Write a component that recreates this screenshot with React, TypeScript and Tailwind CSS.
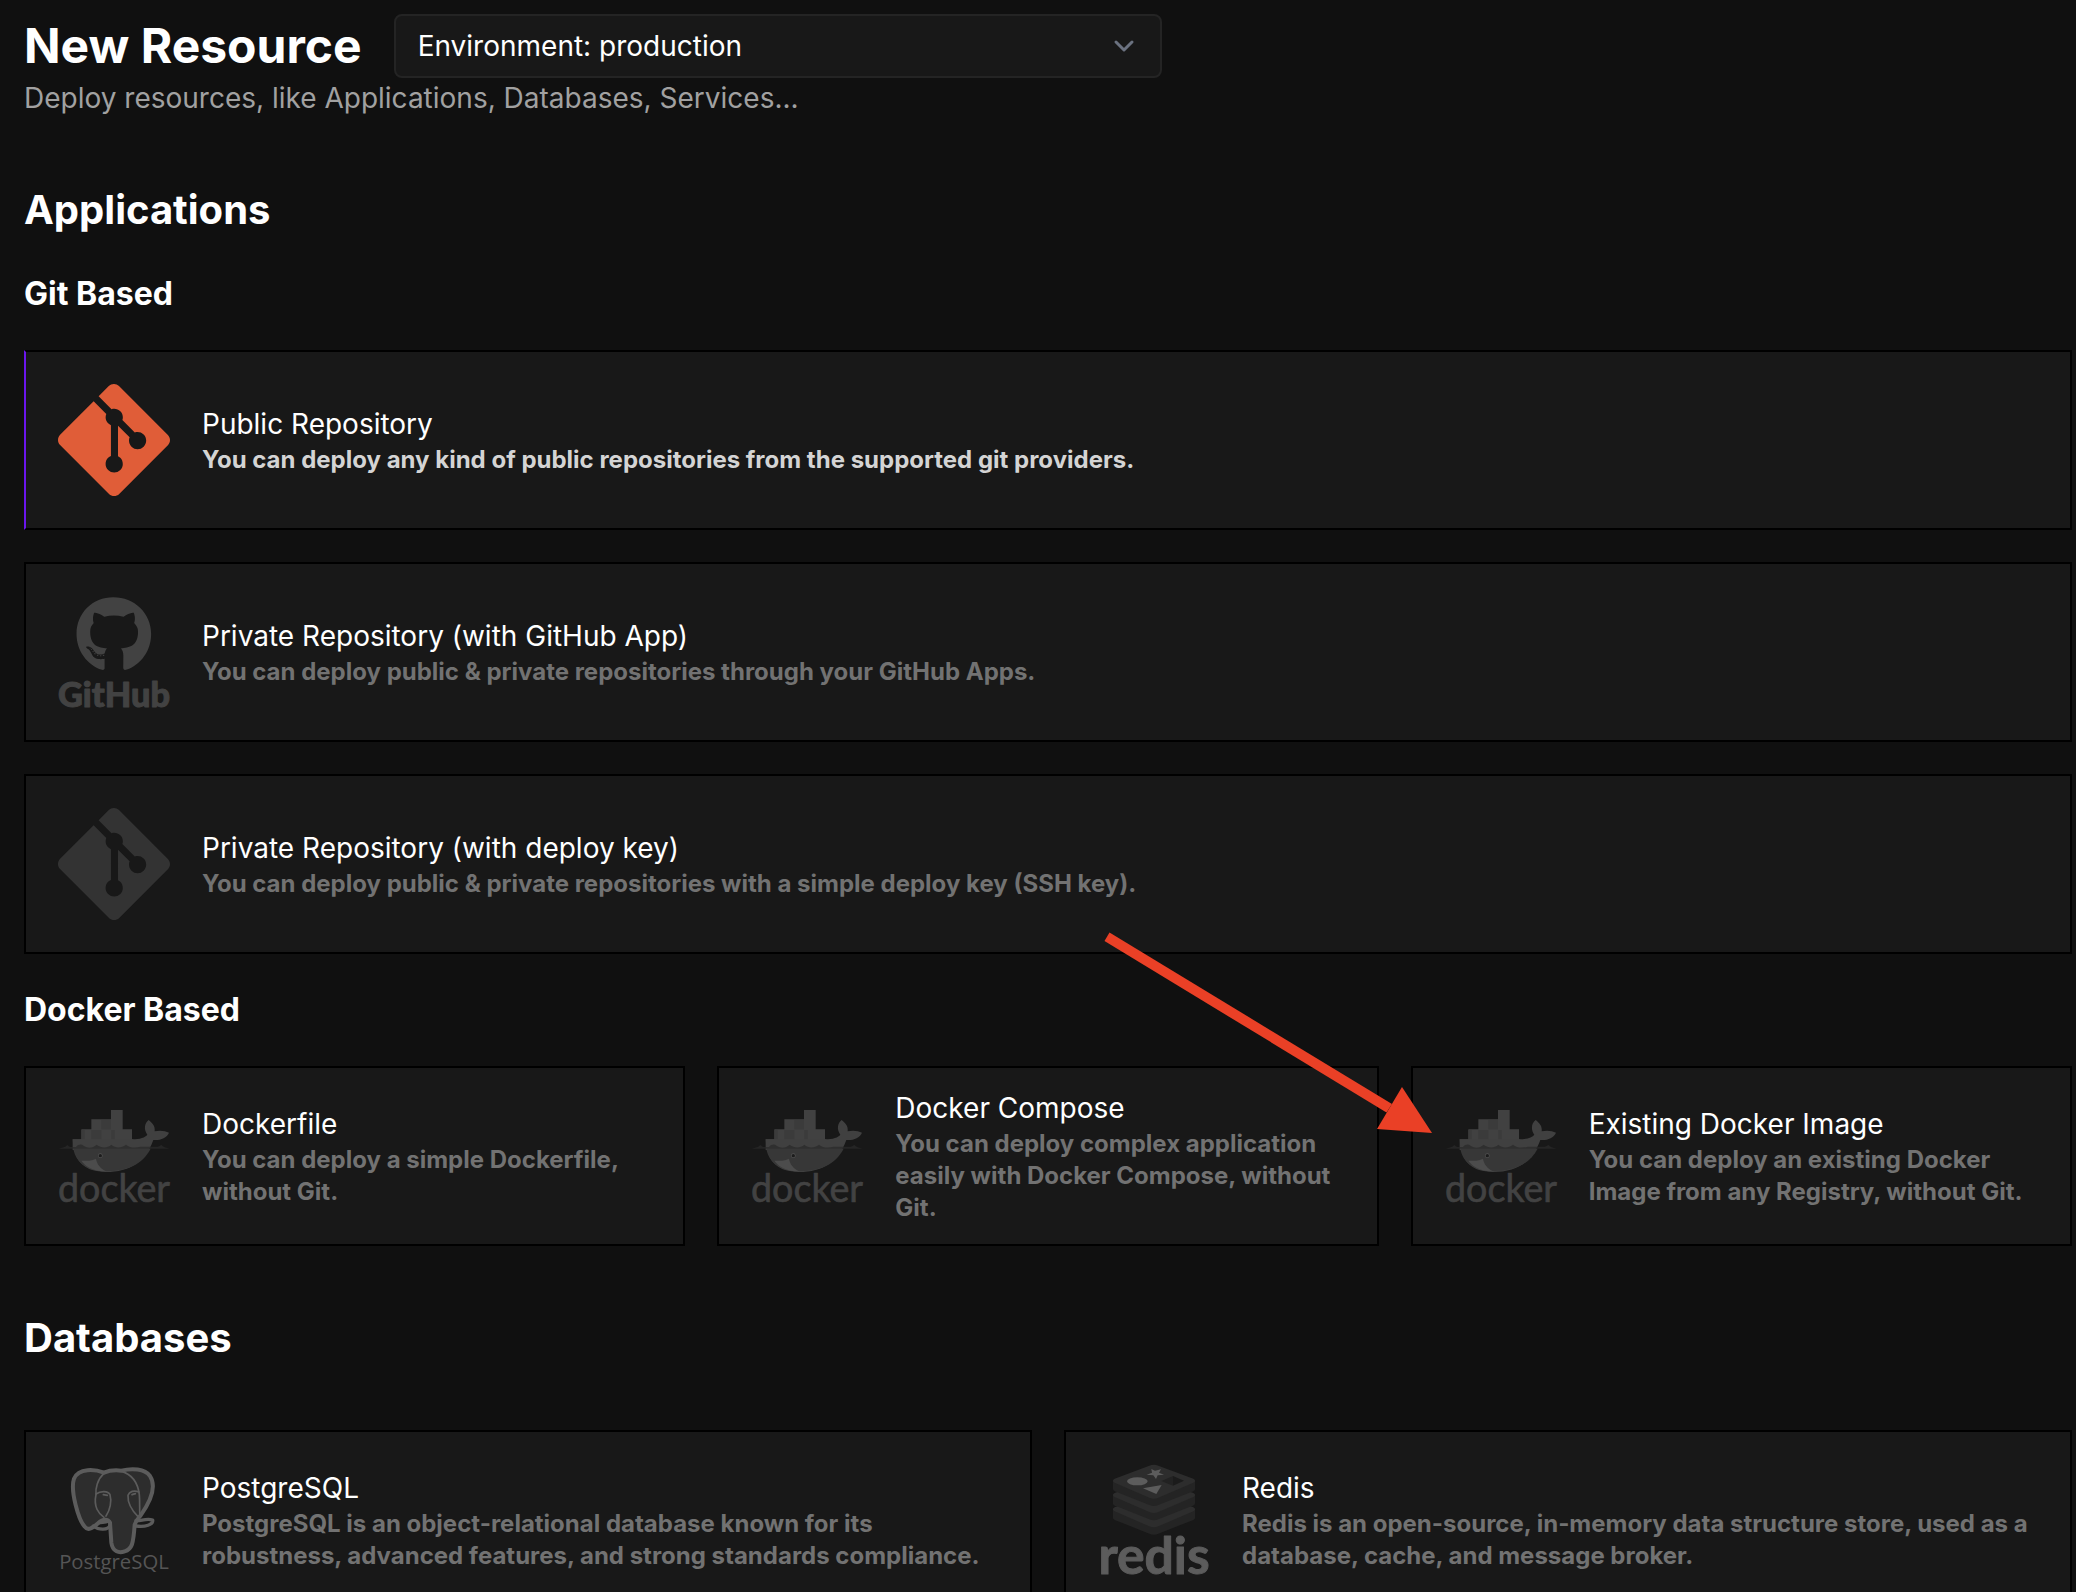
import { useState } from 'react';
import type { ReactNode } from 'react';
import { SiGit } from 'react-icons/si';
import { FaGithub } from 'react-icons/fa';

type CardProps = {
  title: string;
  description: string;
  logo: ReactNode;
  active?: boolean;
  children?: ReactNode;
};

function GithubLogo() {
  return (
    <svg viewBox="0 0 336 336" className="size-28 shrink-0 overflow-visible" fill="#424242" aria-hidden="true">
      <FaGithub x={52} y={0} size={231} color="#424242" />
      <text
        x="168"
        y="332"
        fontSize="103"
        fontWeight="900"
        textAnchor="middle"
        stroke="#424242"
        strokeWidth="3"
        strokeLinejoin="round"
        fontFamily="Lato, sans-serif"
      >
        GitHub
      </text>
    </svg>
  );
}

function DockerLogo() {
  return (
    <svg viewBox="0 0 336 336" className="size-28 shrink-0 overflow-visible" aria-hidden="true">
      {/* containers */}
      <g fill="#414141">
        <path d="M44 118H70V88H100V58H159V30H194V88H222V118H226V150H44Z" />
      </g>
      <g fill="#3b3b3b">
        <rect x="70" y="90" width="10" height="28" />
        <rect x="100" y="90" width="30" height="28" />
        <rect x="130" y="60" width="29" height="28" />
        <rect x="160" y="90" width="10" height="28" />
      </g>
      {/* hull and tail */}
      <path
        d="M44 118H222C246 118 262 112 268 104C256 88 260 68 272 60C284 70 292 78 290 94C304 90 322 92 333 98C326 114 306 122 286 120C262 186 216 216 144 216C82 214 48 190 44 118Z"
        fill="#404040"
      />
      <path d="M46 146H278C254 192 210 213 144 213C90 212 54 190 46 146Z" fill="#373737" />
      <path d="M70 182C96 184 104 180 114 176C116 192 128 206 144 214C108 214 84 202 70 182Z" fill="#4c4c4c" />
      {/* water line */}
      <path
        d="M2 146L22 140L28 135L36 141H54C62 132 70 132 78 138C92 146 104 144 116 134C132 146 148 144 160 134C174 146 190 144 204 134C216 144 232 144 248 140H300L310 135L318 141L334 146Z"
        fill="#2a2a2a"
        opacity="0.75"
      />
      <circle cx="127" cy="167" r="7" fill="#505050" />
      <circle cx="127" cy="167" r="5" fill="#1c1c1c" />
      <text
        x="168"
        y="305"
        fontSize="113"
        textAnchor="middle"
        fill="#424242"
        stroke="#424242"
        strokeWidth="2"
        strokeLinejoin="round"
        fontFamily="Lato, sans-serif"
      >
        docker
      </text>
    </svg>
  );
}

function PostgresLogo() {
  return (
    <svg viewBox="0 0 336 336" className="size-28 shrink-0 overflow-visible" aria-hidden="true">
      <g stroke="#5c5c5c" strokeLinejoin="round" strokeLinecap="round" fill="#2d2d2d">
        <path
          strokeWidth="12"
          d="M138 26C112 16 62 10 48 44C36 80 62 168 80 188C90 202 104 192 122 176C134 164 150 164 156 176L160 236C164 264 184 268 200 262C222 256 226 240 230 182C236 166 244 160 248 154C282 106 294 64 276 36C260 14 222 12 190 20C172 18 152 20 138 26Z"
        />
        <path
          strokeWidth="10"
          fill="none"
          d="M106 186C124 200 150 198 156 184M122 176C134 174 142 176 150 172M234 170C248 172 264 162 284 168C286 182 262 190 234 186"
        />
        <g strokeWidth="5" fill="none">
          <path d="M138 28C118 46 112 74 114 92C106 128 122 150 138 160" />
          <path d="M190 22C226 32 240 60 244 92C246 118 244 140 246 158" />
          <path d="M114 90C128 80 150 80 156 92C162 112 156 138 144 156" />
          <path d="M243 84C228 78 214 82 210 94C208 122 226 144 242 160" />
          <path d="M136 92L148 94M222 92L232 89" />
        </g>
      </g>
      <text x="168" y="314" fontSize="61" textAnchor="middle" fill="#555555" fontFamily="'Open Sans', sans-serif">
        PostgreSQL
      </text>
    </svg>
  );
}

function RedisLogo() {
  return (
    <svg viewBox="0 0 336 336" className="size-28 shrink-0 overflow-visible" aria-hidden="true">
      {[86, 43, 0].map((offset) => (
        <g key={offset} transform={`translate(0 ${offset})`}>
          <path
            d="M45 50V76C46 80 50 82 56 84L154 123C163 127 172 127 181 123L280 84C287 82 291 79 291 75V50Z"
            fill="#242424"
          />
          <path
            d="M50 44L154 5C163 1 172 1 181 5L286 44C293 48 293 52 286 56L181 101C172 105 163 105 154 101L50 56C43 52 43 48 50 44Z"
            fill="#2d2d2d"
          />
        </g>
      ))}
      <path d="M160 15L171 20L189 16L183 26L198 32L179 34L174 45L166 34L146 32L162 26Z" fill="#5c5c5c" />
      <ellipse cx="118" cy="52" rx="31" ry="12" fill="#5c5c5c" />
      <path d="M135 73L191 63L175 90Z" fill="#5c5c5c" />
      <path d="M190 51L225 36V65Z" fill="#222222" />
      <path d="M225 36L258 50L225 65Z" fill="#1b1b1b" />
      <text
        x="168"
        y="331"
        fontSize="155"
        fontWeight="700"
        textAnchor="middle"
        fill="#5c5c5c"
        stroke="#5c5c5c"
        strokeWidth="3"
        strokeLinejoin="round"
        fontFamily="Lato, sans-serif"
      >
        redis
      </text>
    </svg>
  );
}

function Arrow() {
  return (
    <svg
      viewBox="0 0 332 204"
      className="pointer-events-none absolute -left-[309px] -top-[136px] z-10 h-[204px] w-[332px]"
      fill="#ea4026"
      aria-hidden="true"
    >
      <path d="M5.5 .5L288 172L282.500 180.500L.5 9Z" />
      <path d="M298 155L328 201L273 197Z" />
    </svg>
  );
}

function ResourceCard({ title, description, logo, active, children }: CardProps) {
  return (
    <button
      type="button"
      className={`relative flex min-h-[180px] w-full items-center gap-8 border-2 border-black bg-[#181818] px-8 text-left ${
        active ? 'border-l-[#6b16ed]' : ''
      }`}
    >
      {logo}
      <span className="flex flex-col">
        <span className="text-[28px] leading-10 text-white">{title}</span>
        <span className={`text-2xl font-bold ${active ? 'text-neutral-300' : 'text-[#727272]'}`}>{description}</span>
      </span>
      {children}
    </button>
  );
}

export default function App() {
  const [environment, setEnvironment] = useState('production');

  return (
    <main className="h-screen overflow-hidden bg-[#101010] pt-[14px] pr-1 pl-6 font-[Inter,sans-serif] text-white">
      <header>
        <div className="flex items-center gap-8">
          <h1 className="text-5xl font-bold">New Resource</h1>
          <div className="relative w-[768px]">
            <select
              aria-label="Environment"
              value={environment}
              onChange={(e) => setEnvironment(e.target.value)}
              className="h-16 w-full appearance-none rounded-lg border-2 border-[#242424] bg-[#181818] px-[22px] text-[28px] text-white"
            >
              <option value="production">Environment: production</option>
            </select>
            <svg
              viewBox="0 0 20 20"
              className="pointer-events-none absolute top-3 right-[18px] size-10"
              fill="none"
              stroke="#6b7280"
              strokeWidth="1.5"
              strokeLinecap="round"
              strokeLinejoin="round"
              aria-hidden="true"
            >
              <path d="M6 8l4 4 4-4" />
            </svg>
          </div>
        </div>
        <p className="text-[28px] leading-10 text-neutral-400">
          Deploy resources, like Applications, Databases, Services...
        </p>
      </header>

      <section className="pt-16">
        <h2 className="text-[40px] leading-14 font-bold">Applications</h2>
        <h3 className="py-8 text-[32px] leading-12 font-bold">Git Based</h3>
        <div className="grid gap-8">
          <ResourceCard
            active
            title="Public Repository"
            description="You can deploy any kind of public repositories from the supported git providers."
            logo={<SiGit className="size-28 shrink-0 text-[#e05d38]" />}
          />
          <ResourceCard
            title="Private Repository (with GitHub App)"
            description="You can deploy public & private repositories through your GitHub Apps."
            logo={<GithubLogo />}
          />
          <ResourceCard
            title="Private Repository (with deploy key)"
            description="You can deploy public & private repositories with a simple deploy key (SSH key)."
            logo={<SiGit className="size-28 shrink-0 text-[#333333]" />}
          />
        </div>
        <h3 className="py-8 text-[32px] leading-12 font-bold">Docker Based</h3>
        <div className="grid grid-cols-3 gap-8">
          <ResourceCard
            title="Dockerfile"
            description="You can deploy a simple Dockerfile, without Git."
            logo={<DockerLogo />}
          />
          <ResourceCard
            title="Docker Compose"
            description="You can deploy complex application easily with Docker Compose, without Git."
            logo={<DockerLogo />}
          />
          <ResourceCard
            title="Existing Docker Image"
            description="You can deploy an existing Docker Image from any Registry, without Git."
            logo={<DockerLogo />}
          >
            <Arrow />
          </ResourceCard>
        </div>
      </section>

      <section className="pt-16">
        <h2 className="text-[40px] leading-14 font-bold">Databases</h2>
        <div className="grid grid-cols-2 gap-8 pt-16">
          <ResourceCard
            title="PostgreSQL"
            description="PostgreSQL is an object-relational database known for its robustness, advanced features, and strong standards compliance."
            logo={<PostgresLogo />}
          />
          <ResourceCard
            title="Redis"
            description="Redis is an open-source, in-memory data structure store, used as a database, cache, and message broker."
            logo={<RedisLogo />}
          />
        </div>
      </section>
    </main>
  );
}
